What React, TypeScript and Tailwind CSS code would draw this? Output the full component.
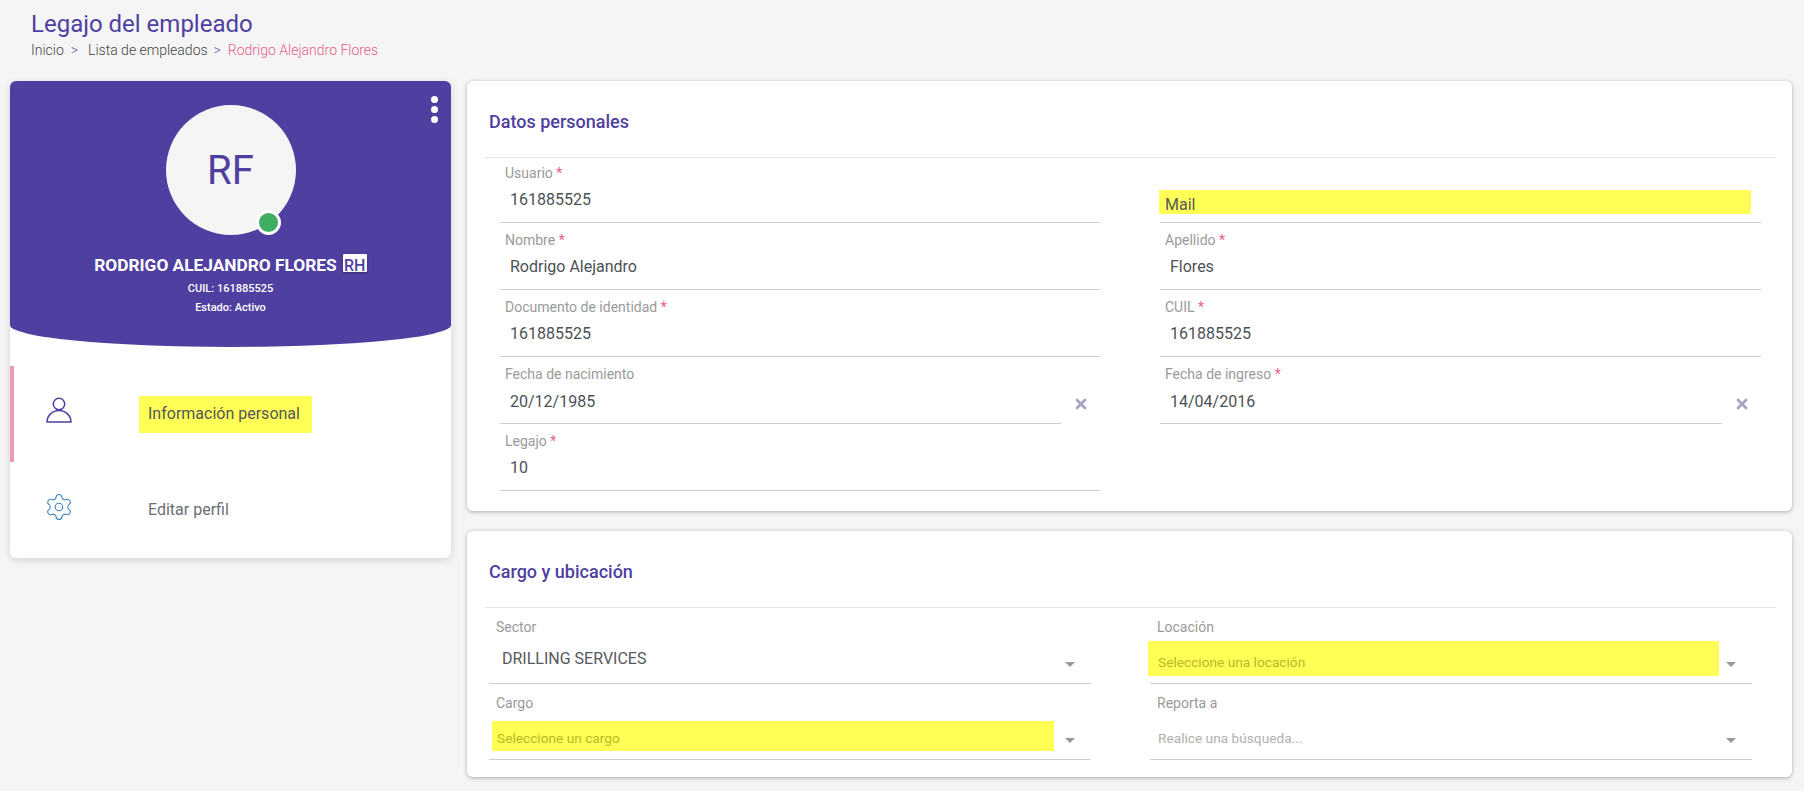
import { Settings, X } from "lucide-react";

const font = "font-['Roboto',sans-serif]";

function Field({ label, value, required, clear, highlight }: { label?: string; value: string; required?: boolean; clear?: boolean; highlight?: boolean }) {
  return (
    <div className="flex h-[67px] items-start">
      <div className={`flex h-full flex-1 flex-col border-b border-[#cfcfcf] ${highlight ? "justify-end pb-[8px]" : "pt-[7px]"}`}>
        {label && (
          <div className="pl-[5px] text-[14px] leading-[20px] text-[#9a9a9a]">
            {label}
            {required && <span className="text-[#e8608a]"> *</span>}
          </div>
        )}
        {highlight ? (
          <div className="-ml-[1px] mr-[10px] h-[24px] bg-[#ffff55] pl-[6px] pt-[3px] text-[16px] leading-[24px] text-[#55585c]">{value}</div>
        ) : (
          <div className={`pl-[10px] text-[16px] leading-[24px] text-[#4d5155] ${clear ? "mt-[6px]" : "mt-[5px]"}`}>{value}</div>
        )}
      </div>
      {clear && (
        <div className="flex h-full w-[39px] items-start justify-center pt-[39px] text-[#a5a5c0]">
          <X size={16} strokeWidth={4.2} />
        </div>
      )}
    </div>
  );
}

function Select({ label, value, placeholder, yellow }: { label: string; value: string; placeholder?: boolean; yellow?: string }) {
  return (
    <div className="relative h-[76px] border-b border-[#cfcfcf] pt-[9px]">
      <div className="pl-[7px] text-[14px] leading-[20px] text-[#9a9a9a]">{label}</div>
      {yellow && <div className={`absolute bg-[#ffff55] ${yellow}`} />}
      <div className={`relative leading-[22px] ${placeholder ? "mt-[14px] pl-[8px] text-[13.7px] text-[#b0b0b0]" : "mt-[11px] pl-[13px] text-[16px] text-[#55585c]"} ${yellow ? "text-[#b8b828]" : ""}`}>
        {value}
      </div>
      <div className="absolute right-[16px] top-[54px] h-0 w-0 border-x-[5px] border-t-[5px] border-x-transparent border-t-[#999999]" />
    </div>
  );
}

function Card({ title, children }: { title: string; children: React.ReactNode }) {
  return (
    <div className="rounded-[6px] bg-white shadow-[0_1px_4px_rgba(0,0,0,0.3)]">
      <div className="ml-[18px] mr-[16px] flex h-[77px] items-center border-b border-[#e4e4e4] pl-[4px] pt-[4px] text-[18px] font-medium text-[#4f3fa0]">
        {title}
      </div>
      {children}
    </div>
  );
}

export default function App() {
  return (
    <div className={`min-h-screen bg-[#f5f5f5] ${font}`}>
      <div className="h-[81px] pl-[31px] pt-[9px]">
        <h1 className="text-[24px] leading-[30px] text-[#4f3fa0]">Legajo del empleado</h1>
        <div className="mt-[1px] flex text-[14px] font-light leading-[20px] text-[#444444]">
          <span>Inicio</span>
          <span className="ml-[7px] text-[#6a60a8]">&gt;</span>
          <span className="ml-[10px]">Lista de empleados</span>
          <span className="ml-[6px] text-[#6a60a8]">&gt;</span>
          <span className="ml-[7px] text-[#e8608a]">Rodrigo Alejandro Flores</span>
        </div>
      </div>

      <div className="flex items-start gap-[16px] pl-[10px]">
        {/* Left side - Profile */}
        <div className="h-[477px] w-[441px] rounded-[6px] bg-white shadow-[0_2px_8px_rgba(0,0,0,0.14)]">
          <div className="relative h-[266px] rounded-[6px_6px_50%_50%/6px_6px_22px_22px] bg-[#4f3fa0] pt-[24px] text-center text-white">
            <div className="absolute right-[13px] top-[15px] flex flex-col gap-[3px]">
              <span className="h-[7px] w-[7px] rounded-full bg-white" />
              <span className="h-[7px] w-[7px] rounded-full bg-white" />
              <span className="h-[7px] w-[7px] rounded-full bg-white" />
            </div>
            <div className="relative mx-auto flex h-[130px] w-[130px] items-center justify-center rounded-full bg-[#f5f5f5] pt-[2px] text-[40px] text-[#4f3fa0]">
              RF
              <span className="absolute bottom-0 right-[15px] h-[25px] w-[25px] rounded-full border-[3px] border-white bg-[#3fae62]" />
            </div>
            <div className="mt-[18px] flex items-start justify-center gap-[6px] text-[17.3px] font-bold leading-[24px]">
              RODRIGO ALEJANDRO FLORES
              <span className="mt-[1px] h-[18px] w-[24px] rounded-[1px] bg-white text-center text-[16px] font-medium leading-[23px] text-[#4f3fa0] shadow-[0_1px_3px_rgba(0,0,0,0.3)]">RH</span>
            </div>
            <div className="mt-[2px] text-[11px] font-medium leading-[19px]">CUIL: 161885525</div>
            <div className="text-[11px] font-medium leading-[19px]">Estado: Activo</div>
          </div>

          <div className="mt-[19px] flex h-[96px] items-center border-l-[4px] border-[#ee9ab5]">
            <svg width="26" height="26" viewBox="0 0 26 26" fill="none" stroke="#4f3fa0" strokeWidth="1.5" className="ml-[32px] -mt-[8px]">
              <path d="M1 25a12 11.5 0 0 1 24 0zM1 25h24" />
              <circle cx="13" cy="7" r="5.7" fill="#ffffff" />
            </svg>
            <div className="ml-[67px] flex h-[37px] w-[173px] items-center bg-[#ffff55] pl-[9px] text-[16px] text-[#55585c]">Información personal</div>
          </div>

          <div className="mt-[16px] flex h-[64px] items-center pl-[34px]">
            <Settings size={30} strokeWidth={0.9} className="-mt-[6px] text-[#3f86c2]" />
            <div className="ml-[74px] text-[16px] text-[#6b6f76]">Editar perfil</div>
          </div>
        </div>

        {/* Right side - Forms */}
        <div className="flex w-[1325px] flex-col gap-[20px]">
          <Card title="Datos personales">
            <div className="grid h-[353px] grid-cols-[600px_601px] content-start gap-x-[60px] pl-[33px] [&>*:nth-child(-n+2)]:-mt-[2px]">
              <Field label="Usuario" required value="161885525" />
              <Field value="Mail" highlight />
              <Field label="Nombre" required value="Rodrigo Alejandro" />
              <Field label="Apellido" required value="Flores" />
              <Field label="Documento de identidad" required value="161885525" />
              <Field label="CUIL" required value="161885525" />
              <Field label="Fecha de nacimiento" value="20/12/1985" clear />
              <Field label="Fecha de ingreso" required value="14/04/2016" clear />
              <Field label="Legajo" required value="10" />
            </div>
          </Card>
          <Card title="Cargo y ubicación">
            <div className="grid h-[169px] grid-cols-[602px_602px] content-start gap-x-[59px] pl-[22px]">
              <Select label="Sector" value="DRILLING SERVICES" />
              <Select label="Locación" value="Seleccione una locación" placeholder yellow="left-[-2px] top-[33px] h-[35px] w-[571px]" />
              <Select label="Cargo" value="Seleccione un cargo" placeholder yellow="left-[3px] top-[37px] h-[30px] w-[562px]" />
              <Select label="Reporta a" value="Realice una búsqueda..." placeholder />
            </div>
          </Card>
        </div>
      </div>
    </div>
  );
}
